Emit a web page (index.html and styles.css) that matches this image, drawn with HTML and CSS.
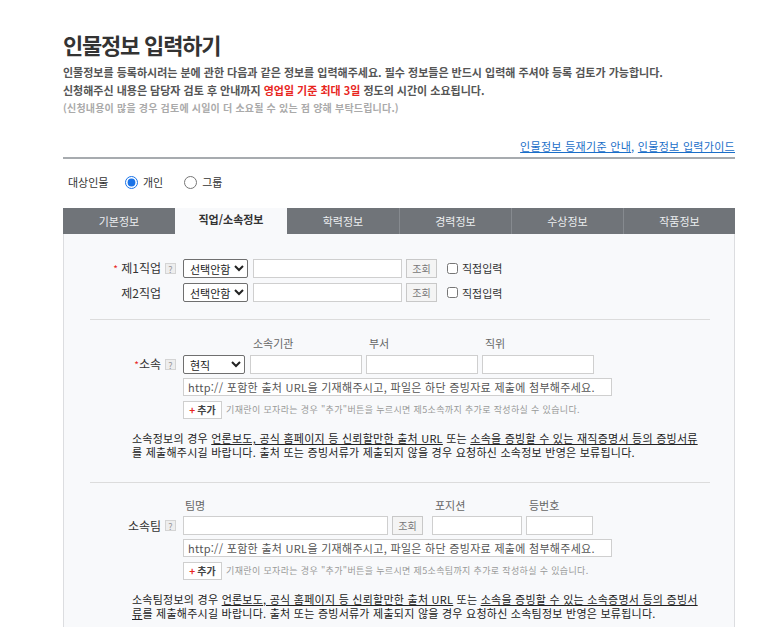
FILE: index.html
```html
<!DOCTYPE html>
<html lang="ko">
<head>
    <meta charset="UTF-8">
    <meta name="viewport" content="width=device-width, initial-scale=1.0">
    <title>인물정보 입력하기</title>
    <link rel="stylesheet" href="styles.css">
</head>
<body>
    <div class="page">
        <h1 class="title">인물정보 입력하기</h1>

        <div class="intro">
            <p>인물정보를 등록하시려는 분에 관한 다음과 같은 정보를 입력해주세요. 필수 정보들은 반드시 입력해 주셔야 등록 검토가 가능합니다.</p>
            <p>신청해주신 내용은 담당자 검토 후 안내까지 <em>영업일 기준 최대 3일</em> 정도의 시간이 소요됩니다.</p>
            <p class="sub">(신청내용이 많을 경우 검토에 시일이 더 소요될 수 있는 점 양해 부탁드립니다.)</p>
        </div>

        <div class="guide">
            <a href="#">인물정보 등재기준 안내</a>, <a href="#">인물정보 입력가이드</a>
        </div>

        <div class="target">
            <span class="target-label">대상인물</span>
            <input type="radio" id="person" name="target" checked>
            <label for="person">개인</label>
            <input type="radio" id="group" name="target">
            <label for="group">그룹</label>
        </div>

        <ul class="tabs">
            <li class="tab">기본정보</li>
            <li class="tab on">직업/소속정보</li>
            <li class="tab">학력정보</li>
            <li class="tab">경력정보</li>
            <li class="tab">수상정보</li>
            <li class="tab">작품정보</li>
        </ul>

        <div class="panel">
            <!-- 직업 -->
            <div class="sec sec-job">
                <div class="grid">
                    <div class="lab"><span class="req">*</span> 제1직업</div>
                    <div class="hslot"><span class="help">?</span></div>
                    <div class="line">
                        <select class="sel sel-job"><option>선택안함</option></select>
                        <input type="text" class="txt job-name">
                        <button class="btn-find">조회</button>
                        <input type="checkbox" id="direct1" class="chk">
                        <label for="direct1" class="chk-label">직접입력</label>
                    </div>

                    <div class="lab">제2직업</div>
                    <div class="hslot"></div>
                    <div class="line">
                        <select class="sel sel-job"><option>선택안함</option></select>
                        <input type="text" class="txt job-name">
                        <button class="btn-find">조회</button>
                        <input type="checkbox" id="direct2" class="chk">
                        <label for="direct2" class="chk-label">직접입력</label>
                    </div>
                </div>
            </div>

            <!-- 소속 -->
            <div class="sec sec-org">
                <div class="grid">
                    <div></div>
                    <div></div>
                    <div class="heads">
                        <span class="head-gap"></span>
                        <span class="head org">소속기관</span>
                        <span class="head org">부서</span>
                        <span class="head org">직위</span>
                    </div>

                    <div class="lab"><span class="req">*</span>소속</div>
                    <div class="hslot"><span class="help">?</span></div>
                    <div class="line">
                        <select class="sel sel-org"><option>현직</option></select>
                        <input type="text" class="txt org">
                        <input type="text" class="txt org">
                        <input type="text" class="txt org">
                    </div>

                    <div></div>
                    <div></div>
                    <input type="text" class="txt url" placeholder="http:// 포함한 출처 URL을 기재해주시고, 파일은 하단 증빙자료 제출에 첨부해주세요.">

                    <div></div>
                    <div></div>
                    <div class="line">
                        <button class="btn-add"><span class="plus">+</span>추가</button>
                        <span class="add-note">기재란이 모자라는 경우 "추가"버튼을 누르시면 제5소속까지 추가로 작성하실 수 있습니다.</span>
                    </div>
                </div>

                <p class="notice">소속정보의 경우 <u>언론보도, 공식 홈페이지 등 신뢰할만한 출처 URL</u> 또는 <u>소속을 증빙할 수 있는 재직증명서 등의 증빙서류</u>를 제출해주시길 바랍니다. 출처 또는 증빙서류가 제출되지 않을 경우 요청하신 소속정보 반영은 보류됩니다.</p>
            </div>

            <!-- 소속팀 -->
            <div class="sec sec-team">
                <div class="grid">
                    <div></div>
                    <div></div>
                    <div class="heads">
                        <span class="head team-name">팀명</span>
                        <span class="head team-pos">포지션</span>
                        <span class="head team-no">등번호</span>
                    </div>

                    <div class="lab">소속팀</div>
                    <div class="hslot"><span class="help">?</span></div>
                    <div class="line">
                        <input type="text" class="txt team-name">
                        <button class="btn-find">조회</button>
                        <input type="text" class="txt team-pos">
                        <input type="text" class="txt team-no">
                    </div>

                    <div></div>
                    <div></div>
                    <input type="text" class="txt url" placeholder="http:// 포함한 출처 URL을 기재해주시고, 파일은 하단 증빙자료 제출에 첨부해주세요.">

                    <div></div>
                    <div></div>
                    <div class="line">
                        <button class="btn-add"><span class="plus">+</span>추가</button>
                        <span class="add-note">기재란이 모자라는 경우 "추가"버튼을 누르시면 제5소속팀까지 추가로 작성하실 수 있습니다.</span>
                    </div>
                </div>

                <p class="notice">소속팀정보의 경우 <u>언론보도, 공식 홈페이지 등 신뢰할만한 출처 URL</u> 또는 <u>소속을 증빙할 수 있는 소속증명서 등의 증빙서류</u>를 제출해주시길 바랍니다. 출처 또는 증빙서류가 제출되지 않을 경우 요청하신 소속팀정보 반영은 보류됩니다.</p>
            </div>
        </div>
    </div>
</body>
</html>
```

FILE: styles.css
```css
body {
    margin: 0;
    background: #fff;
    font-family: "Noto Sans CJK KR", "Noto Sans", sans-serif;
    color: #333;
}

.page {
    width: 672px;
    margin-left: 63px;
    padding-top: 30px;
}

.title {
    margin: 0;
    font-size: 22px;
    line-height: 28px;
    font-weight: 700;
    color: #333;
    letter-spacing: -1.2px;
}

.intro {
    margin-top: 5px;
}

.intro p {
    margin: 0;
    font-size: 11px;
    line-height: 18px;
    font-weight: 700;
    color: #555;
}

.intro em {
    font-style: normal;
    color: #e8261e;
}

.intro .sub {
    font-size: 10px;
    color: #aaa;
    letter-spacing: 0.2px;
}

.guide {
    margin-top: 21px;
    padding-bottom: 3px;
    border-bottom: 2px solid #a7abaf;
    text-align: right;
    font-size: 11px;
    line-height: 16px;
    letter-spacing: 0.3px;
    color: #1a6ec8;
}

.guide a {
    color: #1a6ec8;
    text-decoration: underline;
}

.target {
    margin-top: 14px;
    padding-left: 5px;
    height: 18px;
    display: flex;
    align-items: center;
    font-size: 11px;
}

.target-label {
    width: 57px;
}

.target input {
    margin: 0;
    width: 13px;
    height: 13px;
    accent-color: #1a73e8;
}

.target label {
    margin-left: 5px;
    margin-right: 21px;
}

/* tabs */
.tabs {
    list-style: none;
    margin: 17px 0 0;
    padding: 0;
    display: grid;
    grid-template-columns: repeat(6, 1fr);
    background: #707479;
}

.tab {
    height: 26px;
    line-height: 26px;
    text-align: center;
    font-size: 11px;
    color: #eceef0;
    border-left: 1px solid #868a8f;
}

.tab:first-child {
    border-left: 0;
}

.tab.on {
    background: #f8f9fb;
    color: #333;
    font-weight: 700;
    line-height: 22px;
    border-left: 0;
}

.tab.on + .tab {
    border-left: 0;
}

/* panel */
.panel {
    background: #f8f9fb;
    border: 1px solid #dcdde0;
    border-top: 0;
    height: 400px;
}

.sec {
    margin: 0 24px 0 26px;
}

.sec + .sec {
    border-top: 1px solid #dcdcdc;
}

.sec-job {
    padding: 24px 0 17px;
}

.sec-org {
    padding: 16px 0 23px;
}

.sec-team {
    padding: 15px 0 20px;
}

.grid {
    display: grid;
    grid-template-columns: 71px 22px auto;
    row-gap: 5px;
    align-items: center;
}

.sec-org .grid,
.sec-team .grid {
    row-gap: 4px;
}

.lab {
    text-align: right;
    font-size: 12px;
    line-height: 19px;
    color: #333;
    white-space: nowrap;
}

.req {
    color: #e8261e;
    font-size: 10px;
}

.hslot {
    height: 19px;
    display: flex;
    align-items: center;
}

.help {
    display: inline-block;
    width: 11px;
    height: 11px;
    margin-left: 4px;
    border: 1px solid #d4d4d4;
    background: #eee;
    color: #999;
    font-size: 9px;
    line-height: 11px;
    text-align: center;
    box-sizing: border-box;
}

.line {
    display: flex;
    align-items: center;
    height: 19px;
}

.heads {
    display: flex;
    font-size: 11px;
    line-height: 14px;
    color: #666;
}

.head {
    padding-left: 3px;
    box-sizing: border-box;
}

.head-gap {
    width: 67px;
}

.heads .org {
    width: 112px;
    margin-right: 4px;
}

.sel {
    height: 19px;
    font-family: inherit;
    font-size: 11px;
    color: #222;
    border: 1px solid #6f6f6f;
    border-radius: 2px;
    background: #fff;
    padding: 0 0 0 2px;
}

.sel-job {
    width: 65px;
}

.sel-org {
    width: 62px;
}

.txt {
    height: 19px;
    box-sizing: border-box;
    border: 1px solid #cfcfcf;
    background: #fff;
    padding: 0 4px;
    font-family: inherit;
    font-size: 11px;
    margin: 0;
}

.job-name {
    width: 149px;
    margin-left: 5px;
}

.line .org {
    width: 112px;
    margin-left: 4px;
}

.line .sel-org + .org {
    margin-left: 5px;
}

.url {
    width: 429px;
    height: 18px;
    color: #555;
    letter-spacing: 0.3px;
}

.url::placeholder {
    color: #555;
}

.btn-find {
    width: 31px;
    height: 19px;
    margin-left: 4px;
    padding: 0;
    border: 1px solid #c8c8c8;
    background: #f4f4f4;
    color: #777;
    font-family: inherit;
    font-size: 10px;
}

.chk {
    margin: 0 4px 0 10px;
    width: 11px;
    height: 11px;
}

.chk-label {
    font-size: 11px;
    color: #333;
}

.btn-add {
    height: 18px;
    width: 39px;
    padding: 0;
    border: 1px solid #cfcfcf;
    background: #fff;
    color: #444;
    font-family: inherit;
    font-size: 10px;
    font-weight: 700;
}

.plus {
    color: #e8261e;
    margin-right: 2px;
}

.add-note {
    margin-left: 4px;
    font-size: 9px;
    letter-spacing: 0.35px;
    color: #999;
}

.notice {
    margin: 12px 0 0 42px;
    width: 570px;
    font-size: 11px;
    line-height: 14px;
    letter-spacing: 0.25px;
    color: #222;
    word-break: break-all;
}

.notice u {
    text-underline-offset: 1px;
}

/* team */
.heads .team-name {
    width: 209px;
    padding-left: 2px;
}

.heads .team-pos {
    margin-left: 40px;
    width: 94px;
}

.line .team-name {
    width: 205px;
}

.line .team-pos {
    width: 90px;
    margin-left: 9px;
}

.line .team-no {
    width: 67px;
    margin-left: 4px;
}
```
